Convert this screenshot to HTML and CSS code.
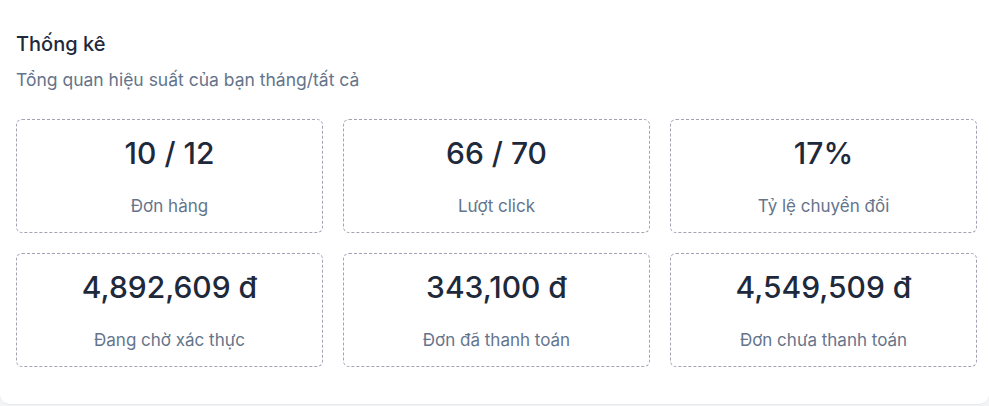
FILE: index.html
```html
<!DOCTYPE html>
<html>

<head>
    <meta charset='utf-8'>
    <title>Thống kê</title>
    <meta name='viewport' content='width=device-width, initial-scale=1'>
    <link rel="stylesheet" href="styles.css">
</head>

<body>
    <div class="card">
        <h2 class="title">Thống kê</h2>
        <p class="sub">Tổng quan hiệu suất của bạn tháng/tất cả</p>
        <div class="stats">
            <div class="stat">
                <div class="num">10 / 12</div>
                <div class="label">Đơn hàng</div>
            </div>
            <div class="stat">
                <div class="num">66 / 70</div>
                <div class="label">Lượt click</div>
            </div>
            <div class="stat">
                <div class="num">17%</div>
                <div class="label">Tỷ lệ chuyển đổi</div>
            </div>
            <div class="stat">
                <div class="num">4,892,609 đ</div>
                <div class="label">Đang chờ xác thực</div>
            </div>
            <div class="stat">
                <div class="num">343,100 đ</div>
                <div class="label">Đơn đã thanh toán</div>
            </div>
            <div class="stat">
                <div class="num">4,549,509 đ</div>
                <div class="label">Đơn chưa thanh toán</div>
            </div>
        </div>
    </div>
</body>

</html>
```

FILE: styles.css
```css
* {
    margin: 0;
    padding: 0;
    box-sizing: border-box;
}

body {
    background-color: #f3f4f6;
    font-family: Inter, "Noto Sans", sans-serif;
    height: 406px;
    overflow: hidden;
}

.card {
    width: 989px;
    height: 417px;
    margin-top: -12px;
    padding: 42px 12px 0 16px;
    background-color: white;
    border-bottom: 1px solid #e5e7eb;
    border-radius: 10px;
}

.title {
    font-size: 20px;
    font-weight: 500;
    line-height: 28px;
    color: #1e293b;
}

.sub {
    margin-top: 10px;
    font-size: 17.5px;
    line-height: 24px;
    color: #64748b;
}

.stats {
    margin-top: 27px;
    display: grid;
    grid-template-columns: repeat(3, 1fr);
    gap: 20px;
}

.stat {
    height: 114px;
    padding-top: 15px;
    border: 1px dashed #a3a3b5;
    border-radius: 6px;
    text-align: center;
}

.num {
    font-size: 30px;
    font-weight: 500;
    line-height: 36px;
    color: #1e293b;
}

.label {
    margin-top: 23px;
    font-size: 17px;
    line-height: 24px;
    color: #64748b;
}
```
